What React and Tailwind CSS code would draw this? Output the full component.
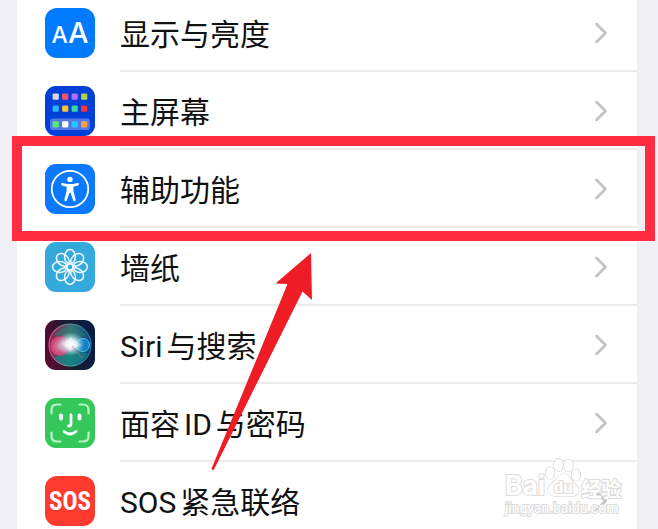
const DisplayIcon = () => (
  <span className="flex h-full w-full items-baseline justify-center rounded-xl bg-[#007aff] pt-2.5 font-['Inter',sans-serif] font-medium leading-none text-white">
    <span className="text-[23px]">A</span>
    <span className="text-[29px]">A</span>
  </span>
);

const homeApps = [
  { y: 7.6, colors: ["#d9dbe0", "#ff4f6b", "#b56bff", "#b2d63c"] },
  { y: 19.6, colors: ["#27b4fa", "#fdc02f", "#3bd6a4", "#f9353c"] },
  { y: 35.2, colors: ["#54e874", "#ffffff", "#1fc9fb", "#ff9d42"] },
];

const HomeIcon = () => (
  <svg viewBox="0 0 50 50" className="h-full w-full" aria-hidden="true">
    <rect width="50" height="50" rx="11" fill="#0040d8" />
    <rect x="5" y="32.6" width="40" height="11.4" rx="3" fill="#5479e5" />
    {homeApps.map((row) =>
      row.colors.map((color, c) => (
        <rect key={color} x={7.6 + c * 9.5} y={row.y} width="6.2" height="6.2" rx="1.2" fill={color} />
      ))
    )}
  </svg>
);

const AccessibilityIcon = () => (
  <svg viewBox="0 0 50 50" className="h-full w-full" aria-hidden="true">
    <rect width="50" height="50" rx="11" fill="#0a79ff" />
    <circle cx="25" cy="25" r="18.2" fill="none" stroke="#fff" strokeWidth="1.8" />
    <circle cx="25" cy="15.4" r="2.7" fill="#fff" />
    <path
      d="M17.2 18.9 L22 20 H28 L32.8 18.9 Q34 18.8 34 20 Q34 21 33 21.4 L28.4 22.8 V27 L30.6 35.6 Q30.8 37 29.6 37.2 Q28.5 37.2 28.1 36 L25.5 28.8 H24.5 L21.9 36 Q21.5 37.2 20.4 37.2 Q19.2 37 19.4 35.6 L21.6 27 V22.8 L17 21.4 Q16 21 16 20 Q16 18.8 17.2 18.9 Z"
      fill="#fff"
    />
  </svg>
);

const WallpaperIcon = () => (
  <svg viewBox="0 0 50 50" className="h-full w-full" aria-hidden="true">
    <rect width="50" height="50" rx="11" fill="#35a9dc" />
    {[0, 45, 90, 135, 180, 225, 270, 315].map((angle) => (
      <ellipse
        key={angle}
        cx="25"
        cy="14.8"
        rx="5.4"
        ry="7.2"
        transform={`rotate(${angle} 25 25)`}
        fill="none"
        stroke="#eefaff"
        strokeWidth="1.5"
      />
    ))}
    <circle cx="25" cy="25" r="3" fill="none" stroke="#eefaff" strokeWidth="1.2" />
  </svg>
);

const SiriIcon = () => (
  <svg viewBox="0 0 50 50" className="h-full w-full" aria-hidden="true">
    <defs>
      <linearGradient id="siri-base" x1="0" y1="0.6" x2="1" y2="0.4">
        <stop offset="0" stopColor="#5b0b31" />
        <stop offset="0.5" stopColor="#171d30" />
        <stop offset="1" stopColor="#071b45" />
      </linearGradient>
      <linearGradient id="siri-orb" x1="0" y1="0.45" x2="1" y2="0.55">
        <stop offset="0" stopColor="#8c1d4c" />
        <stop offset="0.5" stopColor="#36747c" />
        <stop offset="1" stopColor="#0b4389" />
      </linearGradient>
      <linearGradient id="siri-ring" x1="0" y1="0" x2="1" y2="0">
        <stop offset="0" stopColor="#e4487d" />
        <stop offset="0.55" stopColor="#5ca79d" />
        <stop offset="1" stopColor="#15769b" />
      </linearGradient>
      <radialGradient id="siri-pink">
        <stop offset="0" stopColor="#f29bb8" />
        <stop offset="1" stopColor="#d93a70" />
      </radialGradient>
      <radialGradient id="siri-glow">
        <stop offset="0" stopColor="#fff" />
        <stop offset="0.35" stopColor="#f4ffff" stopOpacity="0.9" />
        <stop offset="1" stopColor="#9beaf0" stopOpacity="0" />
      </radialGradient>
    </defs>
    <rect width="50" height="50" rx="11" fill="url(#siri-base)" />
    <circle cx="25" cy="25" r="21" fill="url(#siri-orb)" stroke="url(#siri-ring)" strokeWidth="1.2" />
    <path d="M8 16 Q24 -2 42 17 Q30 12 25 24 Q20 13 8 16 Z" fill="#347d70" opacity="0.5" />
    <path d="M9 38 Q25 28 43 34 Q34 46 25 46 Q15 45 9 38 Z" fill="#0d8c83" opacity="0.65" />
    <circle cx="15" cy="26" r="10" fill="url(#siri-pink)" opacity="0.85" />
    <circle cx="38" cy="25" r="6.5" fill="#147fc2" stroke="#43c7e7" />
    <ellipse cx="26" cy="24" rx="14" ry="12" fill="url(#siri-glow)" />
    <path d="M15 23 Q22 22 26 16 Q28 22 37 25 Q29 27 25 33 Q23 27 15 23 Z" fill="#fff" opacity="0.25" />
    <path d="M27 26 L37 38" stroke="#d4658b" opacity="0.7" />
  </svg>
);

const FaceIcon = () => (
  <svg viewBox="0 0 50 50" className="h-full w-full" aria-hidden="true">
    <rect width="50" height="50" rx="11" fill="#34c759" />
    <g fill="none" stroke="#b9f3c8" strokeWidth="2.2" strokeLinecap="round">
      <path d="M6.5 15.5 V12 Q6.5 6.5 12 6.5 H15.5" />
      <path d="M34.5 6.5 H38 Q43.5 6.5 43.5 12 V15.5" />
      <path d="M6.5 34.5 V38 Q6.5 43.5 12 43.5 H15.5" />
      <path d="M34.5 43.5 H38 Q43.5 43.5 43.5 38 V34.5" />
    </g>
    <g fill="none" stroke="#fff" strokeLinecap="round">
      <path d="M16 17.5 V20.5 M34.5 17.5 V20.5" strokeWidth="4" />
      <path d="M26 17 V26 Q26 28 23.5 28" strokeWidth="2.8" />
      <path d="M19 33.5 Q25 38.5 31 33.5" strokeWidth="2.8" />
    </g>
  </svg>
);

const SosIcon = () => (
  <span className="flex h-full w-full items-center justify-center rounded-xl bg-[#ff3b30] font-['Roboto_Condensed','Roboto',sans-serif] text-[25px] font-bold leading-none text-white">
    SOS
  </span>
);

const Chevron = () => (
  <svg viewBox="0 0 14 22" className="h-[22px] w-3.5" aria-hidden="true">
    <path d="M2.5 2 L11.5 11 L2.5 20" fill="none" stroke="#c4c4c6" strokeWidth="2.8" strokeLinecap="round" strokeLinejoin="round" />
  </svg>
);

const Arrow = () => (
  <svg viewBox="0 0 102 218" className="pointer-events-none absolute left-[211px] top-[253px] h-[218px] w-[102px]" aria-hidden="true">
    <path d="M100 0 L64.5 30.5 L76.5 31 L0.8 215 Q0.5 218 3 216.5 L91.5 38.5 L101 47 Z" fill="#ee1c25" />
  </svg>
);

const Watermark = () => (
  <div className="pointer-events-none absolute left-[505px] top-[458px] flex flex-col font-['Roboto','Noto_Sans_CJK_SC',sans-serif] text-white [paint-order:stroke_fill] [-webkit-text-stroke:2px_#dcdcdc]">
    <div className="flex h-[42px] items-end font-bold leading-none">
      <span className="text-[28px]">Bai</span>
      <span className="relative flex h-full w-9 items-end justify-center">
        <svg viewBox="0 0 36 42" className="absolute inset-0 h-full w-full" aria-hidden="true">
          <g fill="#fff" stroke="#cfcfcf" strokeWidth="1.2">
            <ellipse cx="5" cy="15" rx="4.5" ry="6" />
            <ellipse cx="13.5" cy="7" rx="4.5" ry="6.3" />
            <ellipse cx="23.5" cy="7.5" rx="4.5" ry="6" />
            <ellipse cx="31" cy="17" rx="4.4" ry="6" />
            <path d="M18 16 C12 16 12 22 6 26 C0 31 4 38 10 38 H27 C34 38 36 31 31 27 C25 22 25 16 18 16 Z" />
          </g>
        </svg>
        <span className="relative pb-1 text-[17px]">du</span>
      </span>
      <span className="text-[20px]">经验</span>
    </div>
    <span className="text-sm leading-4">jingyan.baidu.com</span>
  </div>
);

const settings = [
  { id: "display", label: ["显示与亮度"], Icon: DisplayIcon },
  { id: "home", label: ["主屏幕"], Icon: HomeIcon },
  { id: "accessibility", label: ["辅助功能"], Icon: AccessibilityIcon, highlighted: true },
  { id: "wallpaper", label: ["墙纸"], Icon: WallpaperIcon },
  { id: "siri", label: ["Siri", "与搜索"], Icon: SiriIcon },
  { id: "face", label: ["面容", "ID", "与密码"], Icon: FaceIcon },
  { id: "sos", label: ["SOS", "紧急联络"], Icon: SosIcon },
];

const SettingsRow = ({ item }) => {
  const { Icon } = item;

  return (
    <li className="relative">
      <a href={`#${item.id}`} className="flex h-[78px] items-stretch pl-7">
        <span className="flex w-[75px] shrink-0 items-center">
          <span className="h-[50px] w-[50px]" aria-hidden="true">
            <Icon />
          </span>
        </span>
        <span className="flex flex-1 items-center justify-between border-b-2 border-[#ebebec] pr-[29px] pt-0.5">
          {/* latin and chinese runs are set slightly apart */}
          <span className="flex items-baseline gap-1 whitespace-nowrap pt-1 text-[30px] leading-10">
            {item.label.map((run) => (
              <span key={run}>{run}</span>
            ))}
          </span>
          <Chevron />
        </span>
      </a>
      {item.highlighted && (
        <div className="pointer-events-none absolute -bottom-[13px] -left-[5px] -right-[18px] -top-[14px] z-10 border-[10px] border-[#ff2d42]" />
      )}
    </li>
  );
};

export default function App() {
  return (
    <main className="relative h-screen overflow-hidden bg-[#f1f0f6] pl-[17px] pr-[21px] font-['Roboto','Noto_Sans_CJK_SC',sans-serif] text-[#111]">
      {/* list is scrolled slightly past its first row */}
      <ul className="-mt-1.5 bg-white">
        {settings.map((item) => (
          <SettingsRow key={item.id} item={item} />
        ))}
      </ul>
      <Watermark />
      <Arrow />
    </main>
  );
}
